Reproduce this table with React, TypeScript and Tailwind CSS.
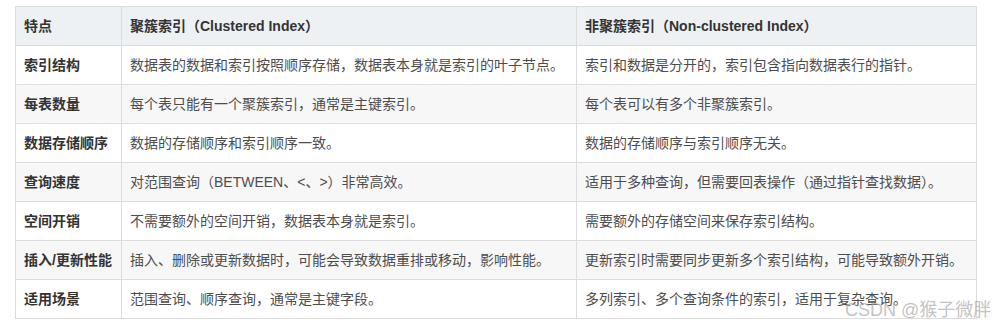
const HEAD = ["特点", "聚簇索引（Clustered Index）", "非聚簇索引（Non-clustered Index）"];

const ROWS: [string, string, string][] = [
  ["索引结构", "数据表的数据和索引按照顺序存储，数据表本身就是索引的叶子节点。", "索引和数据是分开的，索引包含指向数据表行的指针。"],
  ["每表数量", "每个表只能有一个聚簇索引，通常是主键索引。", "每个表可以有多个非聚簇索引。"],
  ["数据存储顺序", "数据的存储顺序和索引顺序一致。", "数据的存储顺序与索引顺序无关。"],
  ["查询速度", "对范围查询（BETWEEN、<、>）非常高效。", "适用于多种查询，但需要回表操作（通过指针查找数据）。"],
  ["空间开销", "不需要额外的空间开销，数据表本身就是索引。", "需要额外的存储空间来保存索引结构。"],
  ["插入/更新性能", "插入、删除或更新数据时，可能会导致数据重排或移动，影响性能。", "更新索引时需要同步更新多个索引结构，可能导致额外开销。"],
  ["适用场景", "范围查询、顺序查询，通常是主键字段。", "多列索引、多个查询条件的索引，适用于复杂查询。"],
];

const cell = "flex h-[39px] items-center border-r border-b border-[#dcdcdc] px-2 text-[14px] whitespace-nowrap";

export default function App() {
  return (
    <div className="relative h-[331px] w-[1001px] bg-white font-['Liberation_Sans','Noto_Sans_CJK_SC',sans-serif]">
      <div className="pt-[6px] pl-[15px]">
        <div className="grid w-[962px] grid-cols-[106px_455px_400px] border-t border-l border-[#dcdcdc]">
          {HEAD.map((h) => (
            <div key={h} className={`${cell} bg-[#edf1f4] font-semibold text-[#333333]`}>
              {h}
            </div>
          ))}
          {ROWS.map((r, i) => {
            const bg = i % 2 === 1 ? "bg-[#f7f7f7]" : "bg-white";
            return [
              <div key={`${i}a`} className={`${cell} ${bg} font-semibold text-[#333333]`}>
                {r[0]}
              </div>,
              <div key={`${i}b`} className={`${cell} ${bg} text-[#4d4d4d]`}>
                {r[1]}
              </div>,
              <div key={`${i}c`} className={`${cell} ${bg} text-[#4d4d4d]`}>
                {r[2]}
              </div>,
            ];
          })}
        </div>
      </div>

      {/* watermark */}
      <div className="absolute top-[299px] left-[845px] text-[18px] leading-[22px] whitespace-nowrap text-[#a8a8a8]/70">
        CSDN @猴子微胖
      </div>
    </div>
  );
}
